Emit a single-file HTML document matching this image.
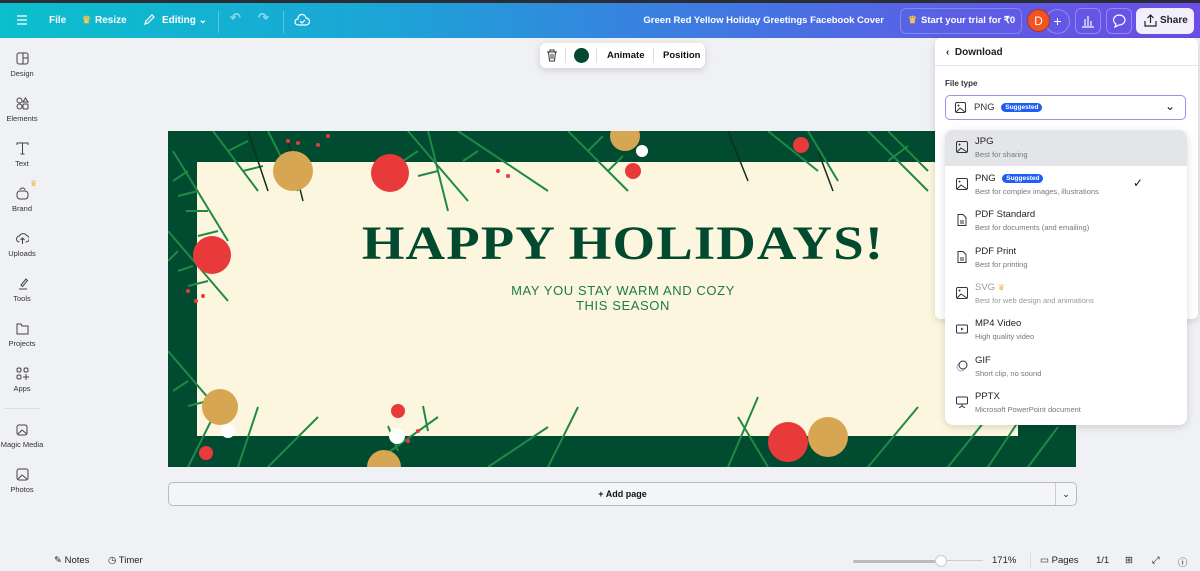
<!DOCTYPE html>
<html><head><meta charset="utf-8"><style>
*{box-sizing:border-box;margin:0;padding:0}
body{width:1200px;height:571px;overflow:hidden;background:#f0f1f5;font-family:"Liberation Sans",sans-serif;position:relative;color:#0d1216}
.top{position:absolute;left:0;top:0;width:1200px;height:38px;background:linear-gradient(90deg,#0bbfcc 0%,#1aa7d6 30%,#3a7fe0 55%,#5c5ee6 80%,#6c4ee6 100%);border-top:3px solid #2a2d33;color:#fff;font-size:10px;font-weight:bold}
.top span{position:absolute;top:12px}
.side{position:absolute;left:0;top:38px;width:44px}
.si{position:absolute;left:0;width:44px;text-align:center;font-size:7.5px;color:#333}
.si svg{display:block;margin:0 auto 4px}
.canvas{position:absolute;left:168px;top:131px;width:908px;height:336px;background:#014b31;overflow:hidden}
.inner{position:absolute;left:29px;top:31px;width:821px;height:274px;background:#fdf6df}
.panel{position:absolute;background:#fff;border-radius:8px;box-shadow:0 2px 8px rgba(0,0,0,.15)}
.row{position:absolute;left:0;width:242px;height:36px}
.row .t{position:absolute;left:30px;top:6px;font-size:9.5px;color:#222}
.row .s{position:absolute;left:30px;top:20px;font-size:7.5px;color:#777}
.row svg{position:absolute;left:11px;top:11px}
.badge{display:inline-block;background:#1f5ef5;color:#fff;font-size:6.5px;font-weight:bold;border-radius:6px;padding:1px 4px;margin-left:4px;vertical-align:1px}
.bot{position:absolute;top:555px;font-size:9.5px;color:#222}
</style></head><body>
<div class="top">
<svg style="position:absolute;left:16px;top:11px" width="12" height="12"><path d="M1 2h10M1 6h10M1 10h10" stroke="#fff" stroke-width="1.3"/></svg>
<span style="left:49px">File</span>
<span style="left:82px;color:#f5c64a">♛</span><span style="left:95px">Resize</span>
<svg style="position:absolute;left:143px;top:10px" width="13" height="13"><path d="M2 11l1-3 6-6 2 2-6 6z" fill="none" stroke="#fff" stroke-width="1.2"/></svg>
<span style="left:162px">Editing ⌄</span>
<div style="position:absolute;left:218px;top:8px;width:1px;height:22px;background:rgba(255,255,255,.3)"></div>
<span style="left:230px;opacity:.5;font-size:13px;top:7px">↶</span><span style="left:258px;opacity:.5;font-size:13px;top:7px">↷</span>
<div style="position:absolute;left:283px;top:8px;width:1px;height:22px;background:rgba(255,255,255,.3)"></div>
<svg style="position:absolute;left:294px;top:10px" width="16" height="14"><path d="M4 12a3 3 0 010-6 4 4 0 018-1 3 3 0 010 7z" fill="none" stroke="#fff" stroke-width="1.2"/><path d="M6 8l2 2 3-3" fill="none" stroke="#fff" stroke-width="1.2"/></svg>
<span style="right:316px;font-size:9.5px">Green Red Yellow Holiday Greetings Facebook Cover</span>
<div style="position:absolute;left:900px;top:5px;width:122px;height:26px;border:1px solid rgba(255,255,255,.25);border-radius:6px"></div>
<span style="left:908px;color:#f5c64a">♛</span><span style="left:921px;font-size:9.5px">Start your trial for ₹0</span>
<div style="position:absolute;left:1045px;top:6px;width:25px;height:25px;border-radius:50%;border:1px solid rgba(255,255,255,.3);text-align:center;line-height:22px;font-size:14px;font-weight:normal">+</div>
<div style="position:absolute;left:1027px;top:6px;width:23px;height:23px;border-radius:50%;background:#f0541f;border:1px solid #a33;text-align:center;line-height:22px;font-size:12px;font-weight:normal">D</div>
<div style="position:absolute;left:1075px;top:5px;width:26px;height:26px;border:1px solid rgba(255,255,255,.3);border-radius:6px"></div>
<svg style="position:absolute;left:1081px;top:11px" width="14" height="14"><path d="M1 13h12M4 12V5M7 12V2M10 12V7" stroke="#fff" stroke-width="1.2"/></svg>
<div style="position:absolute;left:1106px;top:5px;width:26px;height:26px;border:1px solid rgba(255,255,255,.3);border-radius:6px"></div>
<svg style="position:absolute;left:1112px;top:11px" width="14" height="14"><path d="M7 1a6 5 0 110 10l-4 2 1-3a6 5 0 013-9z" fill="none" stroke="#fff" stroke-width="1.2"/></svg>
<div style="position:absolute;left:1136px;top:5px;width:58px;height:26px;background:#f2eefc;border-radius:6px;color:#222"><svg style="position:absolute;left:8px;top:6px" width="13" height="13"><path d="M6.5 9V1M3.5 4l3-3 3 3M1 7v5h11V7" fill="none" stroke="#222" stroke-width="1.2"/></svg><span style="left:24px;top:7px">Share</span></div>
</div>

<div class="side">
<div class="si" style="top:14px"><svg width="13" height="13"><rect x="1" y="1" width="11" height="11" rx="2" fill="none" stroke="#444"/><path d="M7 1v11M7 6h5" stroke="#444"/></svg>Design</div>
<div class="si" style="top:59px"><svg width="13" height="13"><circle cx="3.5" cy="3.5" r="2.5" fill="none" stroke="#444"/><path d="M9.5 1l2.5 4h-5z" fill="none" stroke="#444"/><circle cx="3.5" cy="9.5" r="2.5" fill="none" stroke="#444"/><rect x="7" y="7" width="5" height="5" rx="1" fill="none" stroke="#444"/></svg>Elements</div>
<div class="si" style="top:104px"><svg width="13" height="13"><path d="M1 3V1h11v2M6.5 1v11M4.5 12h4" fill="none" stroke="#444"/></svg>Text</div>
<div class="si" style="top:149px"><svg width="13" height="13"><rect x="1" y="4" width="11" height="8" rx="3" fill="none" stroke="#444"/><path d="M4 3a2.5 2 0 015 0" fill="none" stroke="#444"/></svg>Brand</div>
<span style="position:absolute;left:30px;top:141px;font-size:8px;color:#f5b440">♛</span>
<div class="si" style="top:194px"><svg width="13" height="13"><path d="M3.5 10a3 3 0 010-6 4 4 0 017-.5 3 3 0 01-1 6.5M6.5 12V6M4.5 8l2-2 2 2" fill="none" stroke="#444"/></svg>Uploads</div>
<div class="si" style="top:239px"><svg width="13" height="13"><path d="M3 12h8M5 8l5-6 1.5 1.5-5 6z" fill="none" stroke="#444"/></svg>Tools</div>
<div class="si" style="top:284px"><svg width="13" height="13"><path d="M1 2h4l1 2h6v8H1z" fill="none" stroke="#444"/></svg>Projects</div>
<div class="si" style="top:329px"><svg width="13" height="13"><rect x="1" y="1" width="4" height="4" rx="1.5" fill="none" stroke="#444"/><rect x="8" y="1" width="4" height="4" rx="1.5" fill="none" stroke="#444"/><rect x="1" y="8" width="4" height="4" rx="1.5" fill="none" stroke="#444"/><path d="M10 7v6M7 10h6" stroke="#444"/></svg>Apps</div>
<div style="position:absolute;left:4px;top:370px;width:36px;height:1px;background:#ddd"></div>
<div class="si" style="top:385px"><svg width="13" height="13"><rect x="1" y="2" width="10" height="10" rx="2" fill="none" stroke="#444"/><path d="M2 11l4-4 5 4" fill="none" stroke="#444"/></svg>Magic Media</div>
<div class="si" style="top:430px"><svg width="13" height="13"><rect x="1" y="1" width="11" height="11" rx="2" fill="none" stroke="#444"/><path d="M2 11l4-4 5 4" fill="none" stroke="#444"/></svg>Photos</div>
</div>

<div class="panel" style="left:540px;top:43px;width:165px;height:25px;border-radius:6px;font-size:9.5px;font-weight:bold">
<svg style="position:absolute;left:6px;top:6px" width="12" height="13"><path d="M1 3h10M4 3V1h4v2M2.5 3l1 9h5l1-9M5 5v5M7 5v5" fill="none" stroke="#333"/></svg>
<div style="position:absolute;left:25px;top:5px;width:1px;height:15px;background:#ddd"></div>
<div style="position:absolute;left:34px;top:5px;width:15px;height:15px;border-radius:50%;background:#01492f"></div>
<div style="position:absolute;left:56px;top:5px;width:1px;height:15px;background:#ddd"></div>
<span style="position:absolute;left:67px;top:7px">Animate</span>
<div style="position:absolute;left:113px;top:5px;width:1px;height:15px;background:#ddd"></div>
<span style="position:absolute;left:123px;top:7px">Position</span>
</div>

<div class="canvas">
<div class="inner"></div>
<svg width="908" height="336" style="position:absolute;left:0;top:0">
<g stroke="#1f8a45" stroke-width="2" fill="none">
<path d="M5 20 L60 110 M20 40l-15 10M30 60l-20 5M40 80l-22 0M50 100l-20 5"/>
<path d="M0 100 L60 170M10 120l-10 10M25 135l-15 5M40 150l-20 5"/>
<path d="M0 220 L60 290M20 250l-15 10M40 270l-20 5"/>
<path d="M45 0 L90 60M60 20l20-10M75 40l20-5M100 0l30 60M260 0l20 80M250 20l-15 10M270 40l-20 5"/>
<path d="M240 0 L300 70M290 0 L380 60M310 20l-15 10M600 0l50 40M640 0l30 50M700 0 L760 60M720 30l20-15M720 0l40 40"/>
<path d="M400 0l60 60M420 20l15-15M440 40l15-15"/>
<path d="M200 336l70-50M230 320l-10-25M260 300l-5-25M320 336l60-40M380 336l30-60M560 336l30-70M600 336l-30-50M700 336l50-60M780 336l40-50M820 336l40-60M860 336l30-40"/>
<path d="M20 336l30-60M70 336l20-60M100 336l50-50"/>
</g>
<g stroke="#0c2f1e" stroke-width="1.5" fill="none"><path d="M80 0l20 60M120 10l15 60M560 0l20 50M650 20l15 40"/></g>
<g fill="#e83a3a"><circle cx="222" cy="42" r="19"/><circle cx="44" cy="124" r="19"/><circle cx="620" cy="311" r="20"/><circle cx="465" cy="40" r="8"/><circle cx="230" cy="280" r="7"/><circle cx="38" cy="322" r="7"/><circle cx="633" cy="14" r="8"/></g>
<g fill="#d7a652"><circle cx="125" cy="40" r="20"/><circle cx="52" cy="276" r="18"/><circle cx="660" cy="306" r="20"/><circle cx="457" cy="5" r="15"/><circle cx="216" cy="336" r="17"/></g>
<g fill="#fff"><circle cx="229" cy="305" r="8"/><circle cx="474" cy="20" r="6"/><circle cx="60" cy="300" r="7"/></g>
<g fill="#e83a3a"><circle cx="120" cy="10" r="2"/><circle cx="130" cy="12" r="2"/><circle cx="150" cy="14" r="2"/><circle cx="160" cy="5" r="2"/><circle cx="20" cy="160" r="2"/><circle cx="28" cy="170" r="2"/><circle cx="35" cy="165" r="2"/><circle cx="330" cy="40" r="2"/><circle cx="340" cy="45" r="2"/><circle cx="250" cy="300" r="2"/><circle cx="240" cy="310" r="2"/></g>
</svg>
<div style="position:absolute;left:0;top:88px;width:910px;text-align:center;font-family:'Liberation Serif',serif;font-weight:bold;font-size:48px;color:#024a2f;letter-spacing:1px;line-height:50px;transform:scaleX(1.14);transform-origin:455px 0">HAPPY HOLIDAYS!</div>
<div style="position:absolute;left:0;top:152px;width:910px;text-align:center;font-family:'Liberation Sans',sans-serif;font-size:13px;line-height:15px;color:#1d7a4b;letter-spacing:.6px">MAY YOU STAY WARM AND COZY<br>THIS SEASON</div>
</div>

<div style="position:absolute;left:168px;top:482px;width:909px;height:24px;border:1px solid #bbb;border-radius:5px;background:#f4f5f7;font-size:9px;font-weight:bold;text-align:center;line-height:22px">+ Add page<div style="position:absolute;right:0;top:0;width:21px;height:22px;border-left:1px solid #ccc;line-height:22px;font-weight:normal">⌄</div></div>

<div class="panel" style="left:935px;top:38px;width:263px;height:281px;border-radius:6px">
<span style="position:absolute;left:11px;top:9px;font-size:10px;font-weight:bold;color:#222">‹ &nbsp;Download</span>
<div style="position:absolute;left:0;top:27px;width:263px;height:1px;background:#e5e5e5"></div>
<span style="position:absolute;left:10px;top:41px;font-size:8px;font-weight:bold;color:#333">File type</span>
<div style="position:absolute;left:10px;top:57px;width:241px;height:25px;border:1.5px solid #a98ae8;border-radius:5px">
<svg style="position:absolute;left:9px;top:6px" width="11" height="11"><rect x=".5" y=".5" width="10" height="10" rx="1.5" fill="none" stroke="#333"/><path d="M1 10l4-4 5 4" fill="none" stroke="#333"/><circle cx="3.5" cy="3.5" r="1" fill="#333"/></svg>
<span style="position:absolute;left:28px;top:6px;font-size:9.5px;color:#333">PNG <span class="badge">Suggested</span></span>
<span style="position:absolute;right:10px;top:3px;font-size:12px">⌄</span></div>
</div>

<div class="panel" style="left:945px;top:130px;width:242px;height:295px;overflow:hidden">
<div class="row" style="top:0;background:#e4e5e8"><svg width="12" height="12"><rect x=".5" y=".5" width="11" height="11" rx="1.5" fill="none" stroke="#333"/><path d="M1 11l4-4 6 4" fill="none" stroke="#333"/><circle cx="3.5" cy="3.5" r="1" fill="#333"/></svg><span class="t">JPG</span><span class="s">Best for sharing</span></div>
<div class="row" style="top:37px"><svg width="12" height="12"><rect x=".5" y=".5" width="11" height="11" rx="1.5" fill="none" stroke="#333"/><path d="M1 11l4-4 6 4" fill="none" stroke="#333"/><circle cx="3.5" cy="3.5" r="1" fill="#333"/></svg><span class="t">PNG <span class="badge">Suggested</span></span><span class="s">Best for complex images, illustrations</span><span style="position:absolute;left:188px;top:9px;font-size:12px">✓</span></div>
<div class="row" style="top:73px"><svg width="12" height="12"><path d="M2 .5h5l3 3v8H2z M4 7h4M4 9h4" fill="none" stroke="#333"/></svg><span class="t">PDF Standard</span><span class="s">Best for documents (and emailing)</span></div>
<div class="row" style="top:110px"><svg width="12" height="12"><path d="M2 .5h5l3 3v8H2z M4 7h4M4 9h4" fill="none" stroke="#333"/></svg><span class="t">PDF Print</span><span class="s">Best for printing</span></div>
<div class="row" style="top:146px"><svg width="12" height="12"><rect x=".5" y=".5" width="11" height="11" rx="1.5" fill="none" stroke="#333"/><path d="M1 11l4-4 6 4" fill="none" stroke="#333"/><circle cx="3.5" cy="3.5" r="1" fill="#333"/></svg><span class="t" style="color:#999">SVG <span style="color:#f5b440;font-size:8px">♛</span></span><span class="s" style="color:#999">Best for web design and animations</span></div>
<div class="row" style="top:182px"><svg width="12" height="12"><rect x=".5" y="2" width="11" height="8" rx="1" fill="none" stroke="#333"/><path d="M5 4.5v3l2.5-1.5z" fill="#333"/></svg><span class="t">MP4 Video</span><span class="s">High quality video</span></div>
<div class="row" style="top:219px"><svg width="12" height="12"><circle cx="5" cy="7" r="4" fill="none" stroke="#aaa"/><circle cx="7" cy="5" r="4" fill="#fff" stroke="#333"/></svg><span class="t">GIF</span><span class="s">Short clip, no sound</span></div>
<div class="row" style="top:255px"><svg width="12" height="12"><rect x=".5" y="1" width="11" height="7" rx="1" fill="none" stroke="#333"/><path d="M6 8v2M3 12l3-2 3 2" fill="none" stroke="#333"/></svg><span class="t">PPTX</span><span class="s">Microsoft PowerPoint document</span></div>
</div>

<span class="bot" style="left:54px">✎ Notes</span>
<span class="bot" style="left:108px">◷ Timer</span>
<div style="position:absolute;left:853px;top:560px;width:90px;height:3px;background:#bbb;border-radius:2px"></div>
<div style="position:absolute;left:943px;top:560px;width:40px;height:1px;background:#ccc"></div>
<div style="position:absolute;left:935px;top:555px;width:12px;height:12px;border-radius:50%;background:#fff;border:1px solid #ccc"></div>
<span class="bot" style="left:992px">171%</span>
<div style="position:absolute;left:1030px;top:553px;width:1px;height:15px;background:#ddd"></div>
<span class="bot" style="left:1040px">▭ Pages</span>
<span class="bot" style="left:1096px">1/1</span>
<span class="bot" style="left:1125px">⊞</span>
<span class="bot" style="left:1152px">⤢</span>
<span class="bot" style="left:1178px">ⓘ</span>
</body></html>
